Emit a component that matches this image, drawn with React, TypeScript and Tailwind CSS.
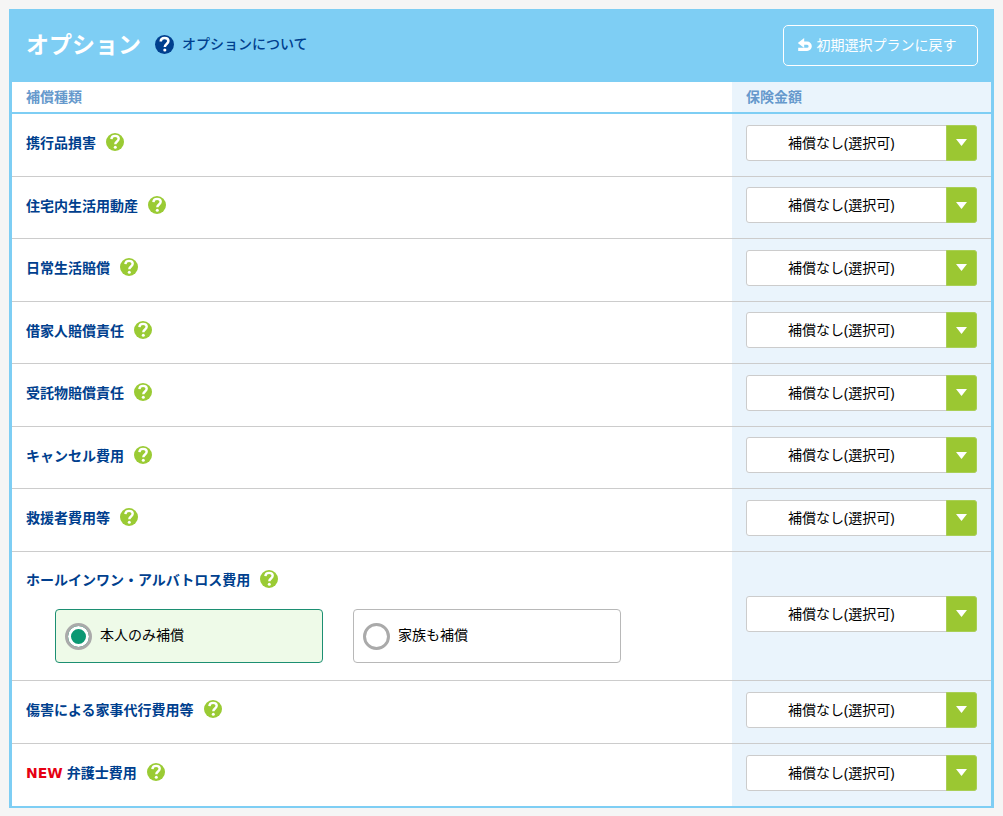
import { useState } from 'react';
import type { ReactNode } from 'react';

type Option = {
  id: string;
  label: string;
  isNew?: boolean;
  choices?: { value: string; label: string }[];
};

const OPTIONS: Option[] = [
  { id: 'belongings', label: '携行品損害' },
  { id: 'household',  label: '住宅内生活用動産' },
  { id: 'daily',      label: '日常生活賠償' },
  { id: 'tenant',     label: '借家人賠償責任' },
  { id: 'bailee',     label: '受託物賠償責任' },
  { id: 'cancel',     label: 'キャンセル費用' },
  { id: 'rescue',     label: '救援者費用等' },
  {
    id: 'golf',
    label: 'ホールインワン・アルバトロス費用',
    choices: [
      { value: 'self',   label: '本人のみ補償' },
      { value: 'family', label: '家族も補償' },
    ],
  },
  { id: 'housework',  label: '傷害による家事代行費用等' },
  { id: 'lawyer',     label: '弁護士費用', isNew: true },
];

function UndoIcon() {
  return (
    <svg className="w-4 h-4 shrink-0" viewBox="0 0 16 16" fill="none" aria-hidden="true">
      <path d="M0.8 6L7.2 1v10z" fill="currentColor" />
      <path d="M5.5 6.2h4.6a3.1 3.1 0 0 1 0 6.2H1.2" stroke="currentColor" strokeWidth={3.2} />
    </svg>
  );
}

function HelpIcon({ className }: { className: string }) {
  return (
    <svg className={className} viewBox="0 0 18 18" fill="none" aria-hidden="true">
      <circle cx="9" cy="9" r="9" fill="currentColor" />
      <path
        d="M5.4 6.1C5.5 4 7 2.9 9.1 2.9c2.1 0 3.6 1.1 3.6 2.9 0 2.7-3.4 2.7-3.4 5.5"
        stroke="white"
        strokeWidth={2.4}
      />
      <circle cx="9.3" cy="14.2" r="1.5" fill="white" />
    </svg>
  );
}

function HelpButton({ label }: { label: string }) {
  return (
    <button type="button" aria-label={`${label}の説明`} className="text-[#9acb34] cursor-pointer">
      <HelpIcon className="w-[18px] h-[18px]" />
    </button>
  );
}

function AmountSelect({ id, label }: { id: string; label: string }) {
  return (
    <div className="relative">
      <select
        id={id}
        aria-label={`${label} 保険金額`}
        className="block w-full h-9 pl-[41px] pr-9 appearance-none rounded-[3px] border border-[#cccccc] bg-white text-black"
      >
        <option>補償なし(選択可)</option>
      </select>
      <span className="absolute inset-y-0 right-0 w-[31px] flex items-center justify-center rounded-r-[3px] bg-[#9bc732] border border-[#a9cf55] pointer-events-none">
        <svg className="w-[11px] h-[7px]" viewBox="0 0 11 7" fill="#fff" aria-hidden="true">
          <path d="M0 0h11L5.5 7z" />
        </svg>
      </span>
    </div>
  );
}

function ChoiceCard({ name, checked, onChange, children }: {
  name: string;
  checked: boolean;
  onChange: () => void;
  children: ReactNode;
}) {
  return (
    <label
      className={[
        'flex items-center gap-2 w-[268px] h-[54px] pl-[9px] rounded-[4px] border cursor-pointer',
        checked ? 'bg-[#eefae8] border-[#1c8f72]' : 'bg-white border-[#b8b8b8]',
      ].join(' ')}
    >
      <input
        type="radio"
        name={name}
        checked={checked}
        onChange={onChange}
        className="appearance-none w-[27px] h-[27px] rounded-full border-3 border-[#aaaaaa] bg-white checked:bg-[#0b9873] checked:shadow-[inset_0_0_0_3px_#fff]"
      />
      <span className="pb-[2px]">{children}</span>
    </label>
  );
}

export default function App() {
  const [golf, setGolf] = useState('self');

  return (
    <div className="min-h-screen bg-[#f5f5f5] px-[9px] pt-[9px] pb-2 text-sm text-black font-['Noto_Sans','Noto_Sans_CJK_JP',sans-serif]">
      <section className="border-x-3 border-b-2 border-[#7ecef4] bg-white">
        <header className="flex items-center justify-between h-[73px] pl-[14px] pr-[13px] bg-[#7ecef4]">
          <div className="flex items-center gap-[14px] pb-[3px]">
            <h2 className="text-[23px] leading-8 font-bold text-white">オプション</h2>
            <a href="#about" className="flex items-center gap-2 font-medium text-[#003f8e]">
              <HelpIcon className="w-[19px] h-[19px]" />
              オプションについて
            </a>
          </div>
          <button
            type="button"
            className="flex items-center justify-center gap-1 w-[195px] h-[41px] pr-2 pb-[2px] rounded-[5px] border border-white text-white cursor-pointer"
          >
            <UndoIcon />
            初期選択プランに戻す
          </button>
        </header>

        <table className="w-full border-separate border-spacing-0">
          <thead>
            <tr className="h-8 text-left text-[#6699cc]">
              <th scope="col" className="px-[14px] border-b-2 border-[#7ecef4] font-bold">補償種類</th>
              <th scope="col" className="w-[259px] px-[14px] border-b-2 border-[#7ecef4] bg-[#eaf4fc] font-bold">保険金額</th>
            </tr>
          </thead>
          <tbody>
            {OPTIONS.map(({ id, label, isNew, choices }) => (
              <tr key={id} className="group odd:h-[63px] even:h-[62px]">
                <td className={`px-[14px] border-b border-[#cccccc] group-last:border-b-0 ${choices ? 'pt-[18px] pb-[17px]' : 'pb-[4px]'}`}>
                  <div className="flex items-start gap-[10px] h-5">
                    <label htmlFor={id} className="font-bold text-[#003f8e]">
                      {isNew && <span className="mr-1 text-[#e60012] font-['DejaVu_Sans',sans-serif]">NEW</span>}
                      {label}
                    </label>
                    <HelpButton label={label} />
                  </div>
                  {choices && (
                    <div className="flex gap-[30px] mt-[19px] ml-[29px]">
                      {choices.map(c => (
                        <ChoiceCard key={c.value} name={id} checked={golf === c.value} onChange={() => setGolf(c.value)}>
                          {c.label}
                        </ChoiceCard>
                      ))}
                    </div>
                  )}
                </td>
                <td className="px-[14px] pb-[5px] border-b border-[#cccccc] group-last:border-b-0 bg-[#eaf4fc]">
                  <AmountSelect id={id} label={label} />
                </td>
              </tr>
            ))}
          </tbody>
        </table>
      </section>
    </div>
  );
}
